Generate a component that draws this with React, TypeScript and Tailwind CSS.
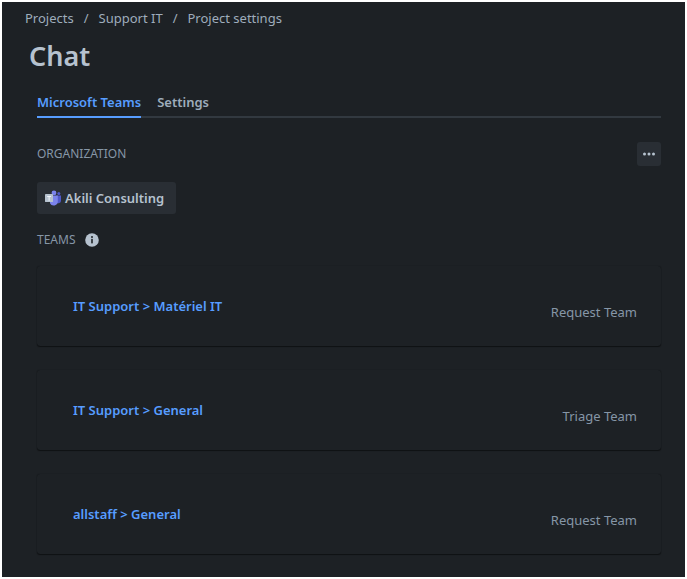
import { useState } from "react";

const crumbs = ["Projects", "Support IT", "Project settings"];

const tabs = ["Microsoft Teams", "Settings"];

const channels = [
  { id: 1, name: "IT Support > Matériel IT", role: "Request Team" },
  { id: 2, name: "IT Support > General", role: "Triage Team" },
  { id: 3, name: "allstaff > General", role: "Request Team" },
];

function TeamsLogo() {
  return (
    <svg viewBox="0 0 16 16" className="w-4 h-4 shrink-0" aria-hidden="true">
      <circle cx="13.8" cy="3.4" r="1.5" fill="#5059c9" />
      <path d="M11.5 5.6H16v5a2.6 2.6 0 0 1-4.5 1.8z" fill="#5059c9" />
      <circle cx="9" cy="2.9" r="2.4" fill="#7b83eb" />
      <path d="M5 5.6h7.8v5.6a4.1 4.1 0 0 1-7.8 2z" fill="#7b83eb" />
      <rect x="0" y="4" width="8" height="8" rx="0.4" fill="#b6c2cf" />
      <path d="M2.2 5.9h3.8v1H4.6v3.8h-1V6.9H2.2z" fill="#f1f4fa" />
    </svg>
  );
}

function InfoIcon() {
  return (
    <svg viewBox="0 0 14 14" className="w-3.5 h-3.5" aria-hidden="true">
      <circle cx="7" cy="7" r="6.8" fill="#b6c2cf" />
      <circle cx="7" cy="4" r="1" fill="#1d2125" />
      <rect x="6.2" y="5.8" width="1.6" height="4.6" rx="0.6" fill="#1d2125" />
    </svg>
  );
}

export default function App() {
  const [activeTab, setActiveTab] = useState("Microsoft Teams");

  return (
    <div className="min-h-screen bg-white p-0.5 flex font-['Noto_Sans','Open_Sans',sans-serif] text-[13px] leading-5">
      <div className="flex-1 bg-[#1d2125] text-[#b6c2cf] pt-1.5 pb-5">
        <nav aria-label="Breadcrumb" className="pl-[23px]">
          <ol className="flex gap-2.5 text-[#9fadbc]">
            {crumbs.map((crumb, i) => (
              <li key={crumb} className="flex gap-2.5">
                {i > 0 && <span>/</span>}
                <a href="#" className="hover:underline">{crumb}</a>
              </li>
            ))}
          </ol>
        </nav>

        <h1 className="mt-3 pl-[27px] text-[27px] leading-8 font-semibold">Chat</h1>

        <main className="pl-[35px] pr-6">
          <div role="tablist" className="mt-5 flex gap-4 border-b-2 border-[#323940] font-semibold">
            {tabs.map((tab) => (
              <button key={tab} type="button" role="tab" aria-selected={tab === activeTab}
                onClick={() => setActiveTab(tab)}
                className={`-mb-0.5 pb-1 border-b-2 ${tab === activeTab ? "text-[#579dff] border-[#579dff]" : "text-[#9fadbc] border-transparent"}`}>
                {tab}
              </button>
            ))}
          </div>

          <div className="mt-6 flex items-center justify-between">
            <h2 className="text-xs text-[#8696a7]">ORGANIZATION</h2>
            <button type="button" aria-label="More actions"
              className="w-6 h-6 rounded-[3px] bg-[#292e34] flex items-center justify-center">
              <svg viewBox="0 0 12 4" className="w-3 h-1" fill="#b6c2cf" aria-hidden="true">
                <circle cx="1.5" cy="2" r="1.5" />
                <circle cx="6" cy="2" r="1.5" />
                <circle cx="10.5" cy="2" r="1.5" />
              </svg>
            </button>
          </div>

          <button type="button"
            className="mt-4 h-8 pl-2 pr-3 rounded-[3px] bg-[#292e34] flex items-center gap-1 font-semibold">
            <TeamsLogo /> Akili Consulting
          </button>

          <div className="mt-4 flex items-center gap-2.5">
            <h2 className="text-xs leading-5 text-[#8696a7]">TEAMS</h2>
            <InfoIcon />
          </div>

          <ul className="mt-4 space-y-6">
            {channels.map((channel) => (
              <li key={channel.id}
                className="h-20 pt-3 pl-9 pr-6 rounded-[3px] flex items-center justify-between shadow-[0_1px_1px_rgba(3,4,4,0.5),0_0_1px_rgba(3,4,4,0.5)]">
                <a href="#" className="pb-3 font-semibold text-[#579dff] hover:underline">{channel.name}</a>
                <span className="text-[#8696a7]">{channel.role}</span>
              </li>
            ))}
          </ul>
        </main>
      </div>
    </div>
  );
}
